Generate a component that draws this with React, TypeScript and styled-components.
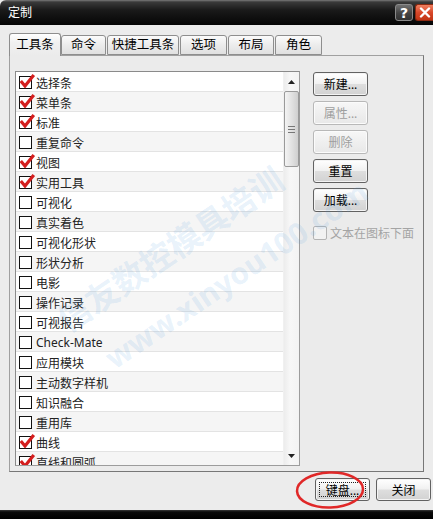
import React from 'react';
import styled, { createGlobalStyle } from 'styled-components';

const GlobalStyle = createGlobalStyle`
  html, body {
    margin: 0;
    padding: 0;
    background: #111;
  }
  body {
    font-family: 'Noto Sans', 'Noto Sans CJK SC', sans-serif;
  }
`;

const Window = styled.div`
  position: relative;
  width: 433px;
  height: 519px;
  display: flex;
  flex-direction: column;
  background: #ececec;
  overflow: hidden;
`;

const TitleBar = styled.div`
  height: 25px;
  flex: none;
  display: flex;
  align-items: center;
  padding-left: 8px;
  box-sizing: border-box;
  border-top-left-radius: 6px;
  background: linear-gradient(#7a7a7a 0, #3a3a3a 2px, #1a1a1a 10px, #050505 100%);
  color: #fff;
  font-size: 12px;
  line-height: 1;
`;

const TitleButtons = styled.div`
  margin-left: auto;
  display: flex;
  gap: 2px;
  align-self: flex-start;
  margin-top: 4px;
`;

const HelpButton = styled.div`
  width: 18px;
  height: 17px;
  box-sizing: border-box;
  border: 1px solid #8a8a8a;
  border-radius: 3px;
  background: linear-gradient(#707070, #444 55%, #333);
  color: #fff;
  font-family: 'DejaVu Sans', sans-serif;
  font-weight: bold;
  font-size: 14px;
  display: flex;
  align-items: center;
  justify-content: center;
`;

const CloseButton = styled.div`
  width: 18px;
  height: 17px;
  box-sizing: border-box;
  border: 1px solid #8d2a12;
  border-right: none;
  border-radius: 3px 0 0 3px;
  background: linear-gradient(#f08060, #d8482a 50%, #c23414);
  display: flex;
  align-items: center;
  justify-content: center;
`;

const Body = styled.div`
  flex: 1;
  display: flex;
  flex-direction: column;
  padding: 8px 9px 0 9px;
`;

const TabRow = styled.div`
  height: 22px;
  display: flex;
  align-items: flex-end;
`;

const Tab = styled.div<{ $w: number; $active?: boolean }>`
  position: relative;
  z-index: ${(p) => (p.$active ? 2 : 1)};
  width: ${(p) => p.$w}px;
  height: ${(p) => (p.$active ? 23 : 20)}px;
  margin-right: ${(p) => (p.$active ? 0 : 1)}px;
  margin-bottom: ${(p) => (p.$active ? -1 : 0)}px;
  box-sizing: border-box;
  border: 1px solid #8e8e8e;
  border-bottom: ${(p) => (p.$active ? 'none' : '1px solid #8e8e8e')};
  border-radius: 3px 3px 0 0;
  background: ${(p) =>
    p.$active
      ? 'linear-gradient(#ffffff, #f0f0f0 40%, #ebebeb)'
      : 'linear-gradient(#fbfbfb, #ececec 50%, #e0e0e0)'};
  display: flex;
  justify-content: center;
  padding-top: ${(p) => (p.$active ? 3 : 1)}px;
  font-size: 12.5px;
  line-height: 16px;
  color: #000;
`;

const Panel = styled.div`
  height: 417px;
  box-sizing: border-box;
  border: 1px solid #a0a0a0;
  border-right-color: #777;
  border-bottom-color: #777;
  background: #ebebeb;
  display: flex;
  gap: 13px;
  padding: 15px 0 0 5px;
`;

const ListBox = styled.div`
  width: 285px;
  height: 395px;
  box-sizing: border-box;
  border: 1px solid #8a8a8a;
  border-right-color: #9c9c9c;
  border-bottom-color: #9c9c9c;
  background: #fff;
  display: flex;
`;

const Rows = styled.div`
  flex: 1;
  overflow: hidden;
`;

const Row = styled.div<{ $alt: boolean }>`
  height: 20px;
  box-sizing: border-box;
  border-bottom: 1px solid #e3e3e3;
  background: ${(p) => (p.$alt ? '#f5f5f5' : '#fff')};
  display: flex;
  align-items: center;
  padding: 2px 0 0 3px;
  gap: 4px;
  font-size: 12px;
  color: #222;
`;

const Box = styled.div<{ $disabled?: boolean; $size?: number }>`
  position: relative;
  width: ${(p) => p.$size ?? 13}px;
  height: ${(p) => p.$size ?? 13}px;
  flex: none;
  box-sizing: border-box;
  border: 1px solid ${(p) => (p.$disabled ? '#b4b4b4' : '#111')};
  border-radius: ${(p) => (p.$disabled ? 2 : 0)}px;
  background: ${(p) => (p.$disabled ? '#f2f2f2' : '#fff')};
`;

const Tick = styled.svg`
  position: absolute;
  left: 0;
  top: -2px;
  overflow: visible;
`;

const ScrollBar = styled.div`
  width: 15px;
  flex: none;
  display: flex;
  flex-direction: column;
  background: linear-gradient(90deg, #ececec, #f7f7f7 40%, #f3f3f3);
  border-left: 1px solid #f0f0f0;
`;

const Arrow = styled.div`
  height: 19px;
  flex: none;
  display: flex;
  align-items: center;
  justify-content: center;
`;

const Thumb = styled.div`
  height: 76px;
  flex: none;
  box-sizing: border-box;
  border: 1px solid #9a9a9a;
  border-radius: 2px;
  background: linear-gradient(90deg, #f4f4f4, #e2e2e2 50%, #cfcfcf);
  display: flex;
  flex-direction: column;
  justify-content: center;
  align-items: center;
  gap: 2px;
`;

const Grip = styled.div`
  width: 7px;
  height: 1px;
  background: #777;
`;

const Track = styled.div`
  flex: 1;
`;

const SideColumn = styled.div`
  display: flex;
  flex-direction: column;
  gap: 5px;
  padding-top: 1px;
`;

const Button = styled.div<{ $disabled?: boolean; $focus?: boolean }>`
  position: relative;
  width: 55px;
  height: 24px;
  box-sizing: border-box;
  border: 1px solid ${(p) => (p.$disabled ? '#b8b8b8' : '#626262')};
  border-radius: 3px;
  background: ${(p) =>
    p.$disabled
      ? 'linear-gradient(#f7f7f7, #efefef 50%, #e8e8e8)'
      : 'linear-gradient(#ffffff, #f1f1f1 48%, #dedede 52%, #d2d2d2)'};
  box-shadow: inset 0 0 0 1px ${(p) => (p.$disabled ? '#fbfbfb' : '#f4f4f4')};
  display: flex;
  align-items: center;
  justify-content: center;
  font-size: 12px;
  color: ${(p) => (p.$disabled ? '#9e9e9e' : '#000')};
  &::after {
    content: '';
    display: ${(p) => (p.$focus ? 'block' : 'none')};
    position: absolute;
    inset: 3px;
    border: 1px dotted #222;
  }
`;

const OptionRow = styled.div`
  display: flex;
  align-items: center;
  gap: 3px;
  margin-top: 7px;
  font-size: 12px;
  color: #a4a4a4;
`;

const Footer = styled.div`
  height: 38px;
  flex: none;
  display: flex;
  justify-content: flex-end;
  align-items: flex-start;
  gap: 6px;
  padding: 6px 2px 0 0;
  box-sizing: border-box;
`;

const BottomStrip = styled.div`
  height: 9px;
  flex: none;
  background: linear-gradient(#3a3a3a, #0a0a0a 2px, #000);
`;

const Watermark = styled.div<{ $left: number; $top: number; $size: number }>`
  position: absolute;
  left: ${(p) => p.$left}px;
  top: ${(p) => p.$top}px;
  transform: rotate(-34deg);
  transform-origin: left center;
  white-space: nowrap;
  font-size: ${(p) => p.$size}px;
  font-weight: bold;
  font-family: 'Noto Sans', 'Noto Sans CJK SC', sans-serif;
  color: rgba(90, 160, 225, 0.15);
  pointer-events: none;
  z-index: 5;
`;

const Circle = styled.svg`
  position: absolute;
  left: 294px;
  top: 470px;
  z-index: 6;
  pointer-events: none;
`;

const tabs = [
  { label: '工具条', w: 52, active: true },
  { label: '命令', w: 45 },
  { label: '快捷工具条', w: 72 },
  { label: '选项', w: 47 },
  { label: '布局', w: 46 },
  { label: '角色', w: 47 },
];

const items: [string, boolean][] = [
  ['选择条', true],
  ['菜单条', true],
  ['标准', true],
  ['重复命令', false],
  ['视图', true],
  ['实用工具', true],
  ['可视化', false],
  ['真实着色', false],
  ['可视化形状', false],
  ['形状分析', false],
  ['电影', false],
  ['操作记录', false],
  ['可视报告', false],
  ['Check-Mate', false],
  ['应用模块', false],
  ['主动数字样机', false],
  ['知识融合', false],
  ['重用库', false],
  ['曲线', true],
  ['直线和圆弧', true],
];

const RedTick = () => (
  <Tick width="13" height="13" viewBox="0 0 13 13">
    <path d="M1.8 7.2 L5 11 L12.8 1.2" fill="none" stroke="#d41e1e" strokeWidth="3.2" strokeLinecap="square" />
  </Tick>
);

const Triangle = ({ down }: { down?: boolean }) => (
  <svg width="7" height="4" viewBox="0 0 7 4">
    <path d={down ? 'M0 0 H7 L3.5 4 Z' : 'M0 4 H7 L3.5 0 Z'} fill="#222" />
  </svg>
);

const App = () => {
  return (
    <Window>
      <GlobalStyle />
      <TitleBar>
        定制
        <TitleButtons>
          <HelpButton>?</HelpButton>
          <CloseButton>
            <svg width="12" height="11" viewBox="0 0 12 11">
              <path d="M2 1.5 L10 9.5 M10 1.5 L2 9.5" stroke="#fff" strokeWidth="2.4" strokeLinecap="round" />
            </svg>
          </CloseButton>
        </TitleButtons>
      </TitleBar>
      <Body>
        <TabRow>
          {tabs.map((t) => (
            <Tab key={t.label} $w={t.w} $active={t.active}>
              {t.label}
            </Tab>
          ))}
        </TabRow>
        <Panel>
          <ListBox>
            <Rows>
              {items.map(([label, checked], i) => (
                <Row key={label} $alt={i % 2 === 1}>
                  <Box>{checked && <RedTick />}</Box>
                  {label}
                </Row>
              ))}
            </Rows>
            <ScrollBar>
              <Arrow>
                <Triangle />
              </Arrow>
              <Thumb>
                <Grip />
                <Grip />
                <Grip />
              </Thumb>
              <Track />
              <Arrow>
                <Triangle down />
              </Arrow>
            </ScrollBar>
          </ListBox>
          <SideColumn>
            <Button>新建...</Button>
            <Button $disabled>属性...</Button>
            <Button $disabled>删除</Button>
            <Button>重置</Button>
            <Button>加载...</Button>
            <OptionRow>
              <Box $disabled $size={14} />
              文本在图标下面
            </OptionRow>
          </SideColumn>
        </Panel>
      </Body>
      <Footer>
        <Button $focus style={{ height: 23 }}>键盘...</Button>
        <Button style={{ height: 23 }}>关闭</Button>
      </Footer>
      <BottomStrip />
      <Watermark $left={60} $top={298} $size={33}>
        信友数控模具培训
      </Watermark>
      <Watermark $left={108} $top={340} $size={30}>
        www.xinyou100.com
      </Watermark>
      <Circle width="72" height="42" viewBox="0 0 72 42">
        <ellipse cx="36" cy="20" rx="33" ry="17.5" fill="none" stroke="#e02828" strokeWidth="2.5" transform="rotate(-2 36 20)" />
      </Circle>
    </Window>
  );
};

export default App;
